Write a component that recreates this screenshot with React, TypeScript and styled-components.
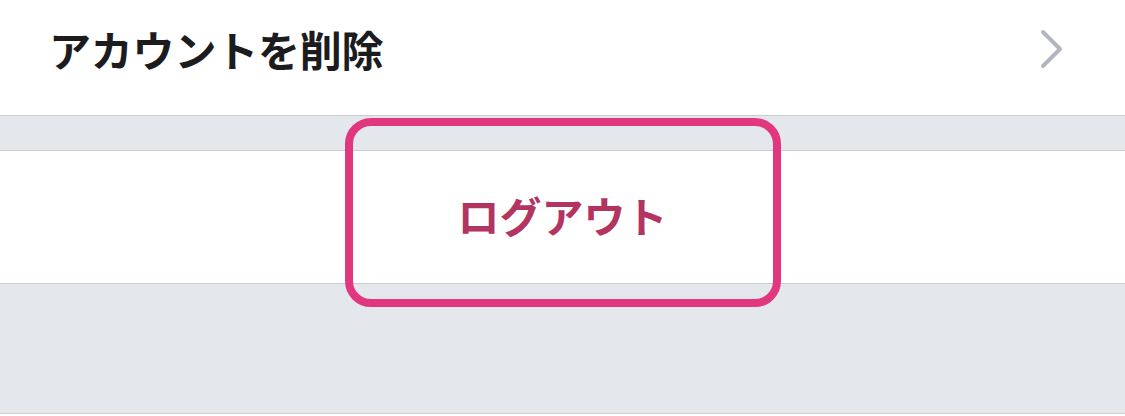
import styled, { createGlobalStyle } from "styled-components";

const GlobalStyle = createGlobalStyle`
  html, body {
    margin: 0;
    padding: 0;
    background: #ffffff;
  }
  body {
    font-family: "Noto Sans CJK JP", "Noto Sans", sans-serif;
    -webkit-font-smoothing: antialiased;
  }
`;

export default function App(): JSX.Element {
  return (
    <>
      <GlobalStyle />
      <Screen>
        <MenuRow>
          <MenuLabel>アカウントを削除</MenuLabel>
          <Chevron viewBox="0 0 24 40" aria-hidden="true">
            <polyline points="3,3 20,20 3,37" />
          </Chevron>
        </MenuRow>
        <Spacer $height={34} />
        <LogoutRow>
          <LogoutButton type="button">ログアウト</LogoutButton>
          <Highlight />
        </LogoutRow>
        <Spacer $height={129} />
      </Screen>
    </>
  );
}

const Screen = styled.main`
  display: flex;
  flex-direction: column;
  width: 100%;
`;

const MenuRow = styled.div`
  display: flex;
  align-items: center;
  justify-content: space-between;
  box-sizing: border-box;
  height: 116px;
  padding: 0 61px 18px 49px;
  background: #ffffff;
  border-bottom: 1px solid #cbcbd0;
`;

const MenuLabel = styled.div`
  font-size: 42px;
  font-weight: 700;
  line-height: 1;
  color: #1c1c1e;
  letter-spacing: -0.2px;
`;

const Chevron = styled.svg`
  width: 24px;
  height: 40px;
  fill: none;
  stroke: #b2b6be;
  stroke-width: 4;
  stroke-linecap: round;
  stroke-linejoin: round;
`;

const Spacer = styled.div<{ $height: number }>`
  height: ${(p) => p.$height}px;
  background: #e4e7ec;
  border-bottom: 1px solid #cbcbd0;
`;

const LogoutRow = styled.div`
  position: relative;
  display: flex;
  align-items: center;
  justify-content: center;
  height: 132px;
  background: #ffffff;
  border-bottom: 1px solid #cbcbd0;
`;

const LogoutButton = styled.button`
  border: none;
  background: none;
  padding: 0;
  margin-top: -5px;
  font-family: inherit;
  font-size: 42px;
  font-weight: 700;
  line-height: 1;
  color: #b13461;
  cursor: pointer;
`;

const Highlight = styled.div`
  position: absolute;
  top: -33px;
  bottom: -24px;
  left: 50%;
  width: 436px;
  margin-left: -218px;
  box-sizing: border-box;
  border: 8px solid #e0377f;
  border-radius: 26px;
  pointer-events: none;
`;
